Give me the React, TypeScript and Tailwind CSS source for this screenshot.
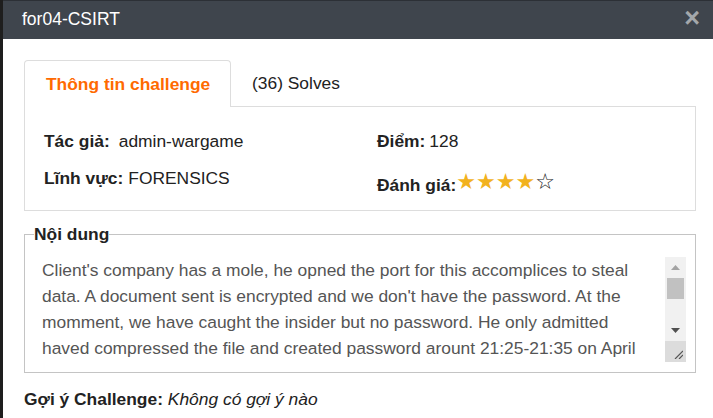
import React from "react";

const font = { fontFamily: '"Liberation Sans", Arial, sans-serif' };

export default function App() {
  const lines = [
    "Client's company has a mole, he opned the port for this accomplices to steal",
    "data. A document sent is encrypted and we don't have the password. At the",
    "momment, we have caught the insider but no password. He only admitted",
    "haved compressed the file and created password arount 21:25-21:35 on April",
  ];
  return (
    <div
      className="w-[713px] h-[418px] flex bg-white overflow-hidden text-[17.4px] text-[#333]"
      style={font}
    >
      <div className="w-[3px] shrink-0 bg-[#1e1e1e]" />
      <div className="flex-1 flex flex-col min-w-0">
        <div className="h-[39px] shrink-0 bg-[#3f454d] border-t border-[#2c3036] flex items-center justify-between pl-[19px] pr-[13px]">
          <span className="text-white text-[17.5px] leading-none">for04-CSIRT</span>
          <span className="text-[#a3a7ab] text-[27px] font-bold leading-none -mt-[3px]">×</span>
        </div>

        <div className="px-[21px] pr-[17px] pt-[21px]">
          {/* tabs */}
          <div className="flex h-[47px]">
            <div className="w-[207px] h-[47px] border border-[#dddddd] border-b-0 rounded-t-[4px] flex items-center pl-[21px] text-[#ff6a00] font-bold bg-white">
              Thông tin challenge
            </div>
            <div className="flex-1 border-b border-[#dddddd] flex items-center pl-[21px] text-[#222]">
              (36) Solves
            </div>
          </div>
          {/* info panel */}
          <div className="h-[104px] border border-t-0 border-[#dddddd] flex pl-[19px]">
            <div className="w-[333px] flex flex-col">
              <div className="mt-[24px] h-[20px] flex items-center text-[#222]">
                <span className="font-bold">Tác giả:</span>
                <span className="ml-[9px]">admin-wargame</span>
              </div>
              <div className="mt-[17px] h-[20px] flex items-center text-[#222]">
                <span className="font-bold">Lĩnh vực:</span>
                <span className="ml-[5px]">FORENSICS</span>
              </div>
            </div>
            <div className="flex flex-col">
              <div className="mt-[24px] h-[20px] flex items-center text-[#222]">
                <span className="font-bold">Điểm:</span>
                <span className="ml-[4px]">128</span>
              </div>
              <div className="mt-[24px] h-[20px] flex items-center text-[#222]">
                <span className="font-bold">Đánh giá:</span>
                <span
                  className="text-[22px] leading-none flex items-center relative -top-[3px]"
                  style={{ fontFamily: '"DejaVu Sans", sans-serif' }}
                >
                  <span className="text-[#f2b21d]">★★★★</span>
                  <span className="text-[#222]">☆</span>
                </span>
              </div>
            </div>
          </div>

          {/* fieldset */}
          <fieldset className="mt-[11px] border border-[#c4c4c4] h-[151px] px-[9px] pb-[10px]">
            <legend className="px-0 font-bold text-[#222] leading-[24px]">Nội dung</legend>
            <div className="flex h-[105px] mt-[11px]">
              <div className="flex-1 pl-[8px] text-[#555] leading-[26px] overflow-hidden whitespace-nowrap">
                {lines.map((l, i) => (
                  <div key={i}>{l}</div>
                ))}
              </div>
              <div className="w-[21px] h-[105px] flex flex-col bg-[#f1f1f1]">
                <div className="h-[21px] flex items-center justify-center">
                  <svg width="9" height="5" viewBox="0 0 9 5">
                    <path d="M0 5 L4.5 0 L9 5 Z" fill="#a3a3a3" />
                  </svg>
                </div>
                <div className="h-[21px] mx-[2px] bg-[#c1c1c1]" />
                <div className="flex-1" />
                <div className="h-[21px] flex items-center justify-center">
                  <svg width="9" height="5" viewBox="0 0 9 5">
                    <path d="M0 0 L9 0 L4.5 5 Z" fill="#505050" />
                  </svg>
                </div>
                <div className="h-[21px] bg-[#dcdcdc] flex items-end justify-end p-[3px]">
                  <svg width="9" height="9" viewBox="0 0 9 9">
                    <path d="M1 9 L9 1 M5 9 L9 5" stroke="#555" strokeWidth="1.2" />
                  </svg>
                </div>
              </div>
            </div>
          </fieldset>

          <div className="mt-[13px] text-[#222]">
            <span className="font-bold">Gợi ý Challenge:</span>{" "}
            <span className="italic">Không có gợi ý nào</span>
          </div>
        </div>
      </div>
    </div>
  );
}
